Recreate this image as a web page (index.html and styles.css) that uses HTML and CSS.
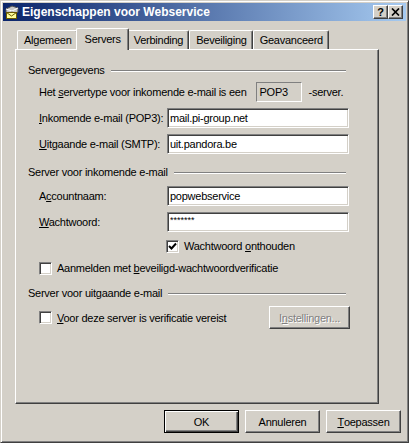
FILE: index.html
```html
<!DOCTYPE html>
<html lang="nl">
<head>
    <meta charset="UTF-8">
    <title>Eigenschappen voor Webservice</title>
    <link rel="stylesheet" href="styles.css">
</head>
<body>
    <div class="window">
        <div class="titlebar">
            <svg class="app-icon" width="16" height="16" viewBox="0 0 16 16">
                <!-- grijze bak -->
                <path d="M2 5 L8 2 L14 4 L14 8 L8 11 L2 9 Z" fill="#c8c8c8" stroke="#505050" stroke-width="1"/>
                <path d="M2 5 L8 7 L14 4" fill="none" stroke="#ffffff" stroke-width="1"/>
                <path d="M8 7 L8 11" stroke="#808080" stroke-width="1"/>
                <!-- envelop -->
                <rect x="2.5" y="8.5" width="10" height="6" fill="#ffff9c" stroke="#6b5a00" stroke-width="1"/>
                <path d="M2.5 8.5 L7.5 12 L12.5 8.5" fill="none" stroke="#6b5a00" stroke-width="1"/>
            </svg>
            <span class="title">Eigenschappen voor Webservice</span>
            <div class="caption-buttons">
                <span class="cap-btn">?</span>
                <span class="cap-btn">
                    <svg width="9" height="8" viewBox="0 0 9 8">
                        <path d="M1 0.5 L8 7.5 M8 0.5 L1 7.5" stroke="#000" stroke-width="1.7"/>
                    </svg>
                </span>
            </div>
        </div>

        <div class="tabs">
            <div class="tab">Algemeen</div>
            <div class="tab selected">Servers</div>
            <div class="tab">Verbinding</div>
            <div class="tab">Beveiliging</div>
            <div class="tab">Geavanceerd</div>
        </div>

        <div class="panel">
            <div class="group-head first">
                <span>Servergegevens</span>
                <span class="etch"></span>
            </div>
            <div class="row type-row">
                <span>Het <u>s</u>ervertype voor inkomende e-mail is een</span>
                <span class="static-box">POP3</span>
                <span>-server.</span>
            </div>
            <div class="row field-row">
                <label class="field-label"><u>I</u>nkomende e-mail (POP3):</label>
                <input class="field" type="text" value="mail.pi-group.net">
            </div>
            <div class="row field-row">
                <label class="field-label"><u>U</u>itgaande e-mail (SMTP):</label>
                <input class="field" type="text" value="uit.pandora.be">
            </div>

            <div class="group-head">
                <span>Server voor inkomende e-mail</span>
                <span class="etch"></span>
            </div>
            <div class="row field-row">
                <label class="field-label">A<u>c</u>countnaam:</label>
                <input class="field" type="text" value="popwebservice">
            </div>
            <div class="row field-row">
                <label class="field-label"><u>W</u>achtwoord:</label>
                <input class="field password" type="text" value="*******">
            </div>
            <div class="row check-row remember">
                <span class="checkbox">
                    <svg width="9" height="9" viewBox="0 0 9 9">
                        <path d="M1 4 L3.5 6.5 L8 1.5" fill="none" stroke="#000" stroke-width="2"/>
                    </svg>
                </span>
                <span>Wachtwoord <u>o</u>nthouden</span>
            </div>
            <div class="row check-row spa">
                <span class="checkbox"></span>
                <span>Aanmelden met <u>b</u>eveiligd-wachtwoordverificatie</span>
            </div>

            <div class="group-head">
                <span>Server voor uitgaande e-mail</span>
                <span class="etch"></span>
            </div>
            <div class="row auth-row">
                <div class="check-row">
                    <span class="checkbox"></span>
                    <span><u>V</u>oor deze server is verificatie vereist</span>
                </div>
                <span class="button disabled">I<u>n</u>stellingen...</span>
            </div>
        </div>

        <div class="dialog-buttons">
            <span class="button default">OK</span>
            <span class="button">Annuleren</span>
            <span class="button"><u>T</u>oepassen</span>
        </div>
    </div>
</body>
</html>
```

FILE: styles.css
```css
body {
    margin: 0;
    font-family: "Liberation Sans", Arial, sans-serif;
    font-size: 11px;
    letter-spacing: -0.25px;
    color: #000;
    background: #d4d0c8;
}

u {
    text-decoration: underline;
    text-underline-offset: 1px;
}

/* Venster */
.window {
    width: 409px;
    height: 443px;
    box-sizing: border-box;
    background: #d4d0c8;
    border: 1px solid;
    border-color: #d4d0c8 #404040 #404040 #d4d0c8;
    box-shadow: inset 1px 1px #ffffff, inset -1px -1px #808080;
    padding: 2px;
}

.titlebar {
    height: 18px;
    display: flex;
    align-items: center;
    padding: 0 3px 0 1px;
    background: linear-gradient(to right, #0a246a, #a6caf0);
}

.app-icon {
    margin-right: 2px;
    flex: none;
}

.title {
    color: #fff;
    font-weight: bold;
    font-size: 12px;
    letter-spacing: 0;
    flex: 1;
}

.caption-buttons {
    display: flex;
}

.cap-btn {
    width: 15px;
    height: 14px;
    box-sizing: border-box;
    display: flex;
    align-items: center;
    justify-content: center;
    background: #d4d0c8;
    border: 1px solid;
    border-color: #ffffff #404040 #404040 #ffffff;
    box-shadow: inset -1px -1px #808080;
    font-weight: bold;
    font-size: 11px;
    letter-spacing: 0;
    padding-bottom: 1px;
}

/* Tabs */
.tabs {
    display: flex;
    align-items: flex-end;
    height: 21px;
    margin: 7px 0 0 12px;
    padding-left: 2px;
}

.tab {
    height: 19px;
    box-sizing: border-box;
    padding: 0 5px 0 6px;
    display: flex;
    align-items: center;
    border: 1px solid;
    border-bottom: none;
    border-color: #ffffff #404040 #404040 #ffffff;
    box-shadow: inset -1px 0 #808080;
    border-radius: 2px 2px 0 0;
    background: #d4d0c8;
}

.tab.selected {
    height: 22px;
    margin: 0 -2px -1px;
    padding: 0 7px 2px 8px;
    position: relative;
    z-index: 1;
}

.panel {
    width: 364px;
    height: 355px;
    box-sizing: border-box;
    margin-left: 12px;
    border: 1px solid;
    border-color: #ffffff #404040 #404040 #ffffff;
    box-shadow: inset -1px -1px #808080;
    padding: 0 28px 0 12px;
}

/* Groepskoppen */
.group-head {
    height: 16px;
    display: flex;
    align-items: center;
    margin-top: 10px;
}

.group-head.first {
    margin-top: 12px;
}

.etch {
    flex: 1;
    height: 1px;
    margin: 1px 4px 0 6px;
    background: #808080;
    border-bottom: 1px solid #ffffff;
}

.row {
    display: flex;
    align-items: center;
    padding-left: 11px;
}

.type-row {
    height: 20px;
    margin-top: 4px;
}

.static-box {
    width: 46px;
    height: 20px;
    box-sizing: border-box;
    margin: 0 7px 0 9px;
    padding: 0 3px;
    display: flex;
    align-items: center;
    border: 1px solid;
    border-color: #808080 #ffffff #ffffff #808080;
}

.field-row {
    height: 20px;
    margin-top: 6px;
}

.group-head + .field-row {
    margin-top: 6px;
}

.field-label {
    width: 128px;
    flex: none;
}

.field {
    width: 182px;
    height: 20px;
    box-sizing: border-box;
    margin: 0;
    padding: 0 2px;
    font-family: inherit;
    font-size: 11px;
    letter-spacing: -0.25px;
    color: #000;
    background: #fff;
    border: 1px solid;
    border-color: #808080 #ffffff #ffffff #808080;
    box-shadow: inset 1px 1px #404040, inset -1px -1px #d4d0c8;
    outline: none;
}

.field.password {
    font-size: 9px;
    letter-spacing: 0;
    padding-bottom: 4px;
}

/* Selectievakjes */
.check-row {
    display: flex;
    align-items: center;
    height: 14px;
}

.remember {
    margin-top: 7px;
    padding-left: 138px;
}

.spa {
    margin-top: 8px;
}

.checkbox {
    width: 13px;
    height: 13px;
    box-sizing: border-box;
    margin-right: 5px;
    display: flex;
    align-items: center;
    justify-content: center;
    background: #fff;
    border: 1px solid;
    border-color: #808080 #ffffff #ffffff #808080;
    box-shadow: inset 1px 1px #404040, inset -1px -1px #d4d0c8;
    flex: none;
}

.auth-row {
    height: 23px;
    margin-top: 5px;
    justify-content: space-between;
}

/* Knoppen */
.button {
    height: 23px;
    box-sizing: border-box;
    display: flex;
    align-items: center;
    justify-content: center;
    background: #d4d0c8;
    border: 1px solid;
    border-color: #ffffff #404040 #404040 #ffffff;
    box-shadow: inset -1px -1px #808080;
}

.auth-row .button {
    width: 81px;
}

.button.disabled {
    color: #808080;
    text-shadow: 1px 1px #ffffff;
}

.button.default {
    border-color: #000;
    box-shadow: inset 1px 1px #ffffff, inset -1px -1px #404040, inset -2px -2px #808080;
}

.dialog-buttons {
    display: flex;
    justify-content: flex-end;
    gap: 6px;
    margin-top: 6px;
    padding-right: 5px;
}

.dialog-buttons .button {
    width: 75px;
}
```
